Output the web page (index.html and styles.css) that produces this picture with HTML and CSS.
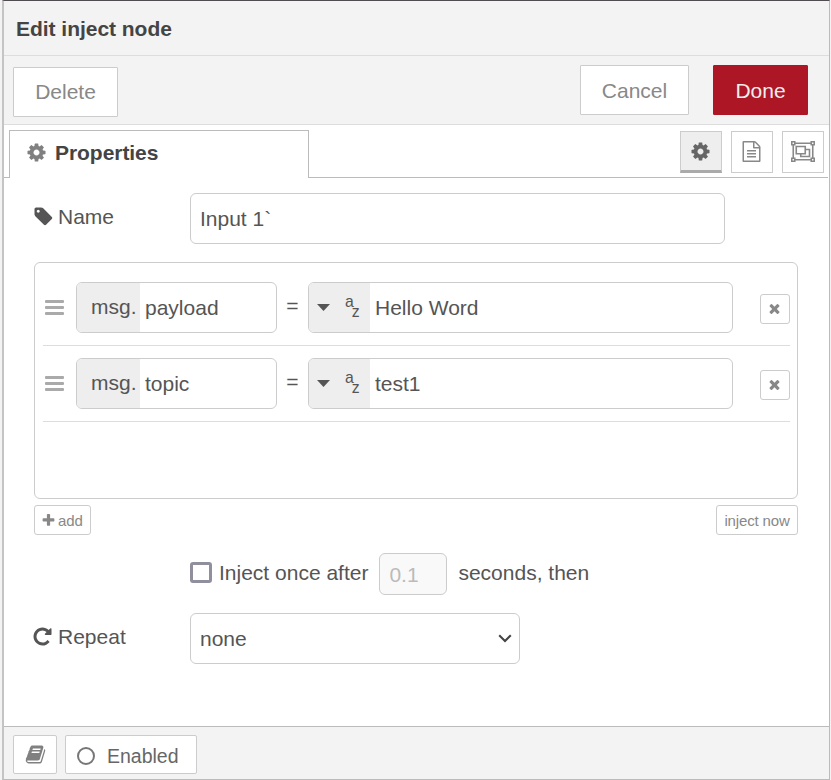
FILE: index.html
```html
<!DOCTYPE html>
<html lang="en">
<head>
<meta charset="utf-8">
<title>Edit inject node</title>
<link rel="stylesheet" href="styles.css">
</head>
<body>
<svg class="defs" aria-hidden="true">
  <symbol id="cog" viewBox="0 0 1792 1792"><path d="M1152 896q0-106-75-181t-181-75-181 75-75 181 75 181 181 75 181-75 75-181zm512-109v222q0 12-8 23t-20 13l-185 28q-19 54-39 91 35 50 107 138 10 12 10 25t-9 23q-27 37-99 108t-94 71q-12 0-26-9l-138-108q-44 23-91 38-16 136-29 186-7 28-36 28h-222q-14 0-24.5-8.5t-11.5-21.5l-28-184q-49-16-90-37l-141 107q-10 9-25 9-14 0-25-11-126-114-165-168-7-10-7-23 0-12 8-23 15-21 51-66.5t54-70.5q-27-50-41-99l-183-27q-13-2-21-12.5t-8-23.5v-222q0-12 8-23t19-13l186-28q14-46 39-92-40-57-107-138-10-12-10-24 0-10 9-23 26-36 98.5-107.5t94.5-71.5q13 0 26 10l138 107q44-23 91-38 16-136 29-186 7-28 36-28h222q14 0 24.5 8.5t11.5 21.5l28 184q49 16 90 37l142-107q9-9 24-9 13 0 25 10 129 119 165 170 7 8 7 22 0 12-8 23-15 21-51 66.5t-54 70.5q26 50 41 98l183 28q13 2 21 12.5t8 23.5z"/></symbol>
  <symbol id="times" viewBox="0 0 1792 1792"><path d="M1490 1322q0 40-28 68l-136 136q-28 28-68 28t-68-28l-294-294-294 294q-28 28-68 28t-68-28l-136-136q-28-28-28-68t28-68l294-294-294-294q-28-28-28-68t28-68l136-136q28-28 68-28t68 28l294 294 294-294q28-28 68-28t68 28l136 136q28 28 28 68t-28 68l-294 294 294 294q28 28 28 68z"/></symbol>
</svg>
<div class="tray">
  <header class="title">Edit inject node</header>
  <div class="toolbar">
    <button class="btn delete">Delete</button>
    <button class="btn cancel">Cancel</button>
    <button class="btn primary">Done</button>
  </div>
  <nav class="tabs">
    <div class="tab"><svg class="icon"><use href="#cog"/></svg><span>Properties</span></div>
    <div class="tab-buttons">
      <button class="tab-btn selected"><svg class="icon"><use href="#cog"/></svg></button>
      <button class="tab-btn"><svg class="icon" viewBox="0 0 1792 1792"><path d="M1596 380q28 28 48 76t20 88v1152q0 40-28 68t-68 28h-1344q-40 0-68-28t-28-68v-1600q0-40 28-68t68-28h896q40 0 88 20t76 48zm-444-244v376h376q-10-29-22-41l-313-313q-12-12-41-22zm384 1528v-1024h-416q-40 0-68-28t-28-68v-416h-768v1536h1280zm-1024-864q0-14 9-23t23-9h704q14 0 23 9t9 23v64q0 14-9 23t-23 9h-704q-14 0-23-9t-9-23v-64zm736 224q14 0 23 9t9 23v64q0 14-9 23t-23 9h-704q-14 0-23-9t-9-23v-64q0-14 9-23t23-9h704zm0 256q14 0 23 9t9 23v64q0 14-9 23t-23 9h-704q-14 0-23-9t-9-23v-64q0-14 9-23t23-9h704z"/></svg></button>
      <button class="tab-btn"><svg class="group-icon" viewBox="0 0 24 21"><path d="M4 2.25h16M4 18.75h16M2.250 4v13M21.750 4v13M.75.75h3v3h-3zM20.250.75h3v3h-3zM.75 17.250h3v3h-3zM20.250 17.250h3v3h-3zM5.250 5.500h9v7.250h-9zM15 8.500h3.500v7h-8.750V13.500"/></svg></button>
    </div>
  </nav>
  <main class="form">
    <div class="row name-row">
      <label class="label"><svg class="icon" viewBox="0 0 1792 1792"><path d="M576 448q0-53-37.5-90.5t-90.5-37.5-90.5 37.5-37.5 90.5 37.5 90.5 90.5 37.5 90.5-37.5 37.5-90.5zm1067 576q0 53-37 90l-491 492q-39 37-91 37-53 0-90-37l-715-716q-38-37-64.5-101t-26.5-117v-416q0-52 38-90t90-38h416q53 0 117 26.5t102 64.5l715 714q37 39 37 91z"/></svg>Name</label>
      <div class="field name-field">Input 1`</div>
    </div>
    <div class="props">
      <div class="prop">
        <span class="handle"><i></i><i></i><i></i></span>
        <div class="field typed key"><span class="type">msg.</span><span class="value">payload</span></div>
        <span class="eq">=</span>
        <div class="field typed val"><span class="type"><i class="caret"></i><span class="az"><b>a</b><b>z</b></span></span><span class="value">Hello Word</span></div>
        <button class="small remove"><svg><use href="#times"/></svg></button>
      </div>
      <div class="prop">
        <span class="handle"><i></i><i></i><i></i></span>
        <div class="field typed key"><span class="type">msg.</span><span class="value">topic</span></div>
        <span class="eq">=</span>
        <div class="field typed val"><span class="type"><i class="caret"></i><span class="az"><b>a</b><b>z</b></span></span><span class="value">test1</span></div>
        <button class="small remove"><svg><use href="#times"/></svg></button>
      </div>
    </div>
    <div class="list-actions">
      <button class="small add"><svg viewBox="0 0 1792 1792"><path d="M1600 736v192q0 40-28 68t-68 28h-416v416q0 40-28 68t-68 28h-192q-40 0-68-28t-28-68v-416h-416q-40 0-68-28t-28-68v-192q0-40 28-68t68-28h416v-416q0-40 28-68t68-28h192q40 0 68 28t28 68v416h416q40 0 68 28t28 68z"/></svg><span>add</span></button>
      <button class="small inject"><span>inject now</span></button>
    </div>
    <div class="once">
      <span class="checkbox"></span><span class="once-text">Inject once after</span>
      <div class="field delay">0.1</div>
      <span>seconds, then</span>
    </div>
    <div class="row repeat-row">
      <label class="label"><svg class="icon" viewBox="0 0 1792 1792"><path d="M1664 256v448q0 26-19 45t-45 19h-448q-42 0-59-40-17-39 14-69l138-138q-148-137-349-137-104 0-198.5 40.5t-163.5 109.5-109.5 163.5-40.5 198.5 40.5 198.5 109.5 163.5 163.5 109.5 198.5 40.5q119 0 225-52t179-147q7-10 23-12 15 0 25 9l137 138q9 8 9.5 20.5t-7.5 22.5q-109 132-264 204.5t-327 72.5q-156 0-298-61t-245-164-164-245-61-298 61-298 164-245 245-164 298-61q147 0 284.5 55.5t244.5 156.5l130-129q29-31 70-14 39 17 39 59z"/></svg>Repeat</label>
      <div class="field select">none<svg viewBox="0 0 14 9"><path d="M1.2 1.2 7 7l5.8-5.8"/></svg></div>
    </div>
  </main>
  <footer class="footer">
    <button class="foot-btn book"><svg class="icon" viewBox="0 0 1792 1792"><path d="M1703 478q40 57 18 129l-275 906q-19 64-76.5 107.5t-122.5 43.5h-923q-77 0-148.5-53.5t-99.5-131.5q-24-67-2-127 0-4 3-27t4-37q1-8-3-21.5t-3-19.5q2-11 8-21t16.5-23.5 16.5-23.5q23-38 45-91.5t30-91.5q3-10 .5-30t-.5-28q3-11 17-28t17-23q21-36 42-92t25-90q1-9-2.5-32t.5-28q4-13 22-30.5t22-22.5q19-26 42.5-84.5t27.5-96.5q1-8-3-25.5t-2-26.5q2-8 9-18t18-23 17-21q8-12 16.5-30.5t15-35 16-36 19.5-32 26.5-23.5 36-11.5 47.5 5.5l-1 3q38-9 51-9h761q74 0 114 56t18 130l-274 906q-36 119-71.5 153.5t-128.5 34.5h-869q-27 0-38 15-11 16-1 43 24 70 144 70h923q29 0 56-15.5t35-41.5l300-987q7-22 5-57 38 15 59 43zm-1064 2q-4 13 2 22.5t20 9.5h608q13 0 25.5-9.5t16.5-22.5l21-64q4-13-2-22.5t-20-9.5h-608q-13 0-25.5 9.5t-16.5 22.5zm-83 256q-4 13 2 22.5t20 9.5h608q13 0 25.5-9.5t16.5-22.5l21-64q4-13-2-22.5t-20-9.5h-608q-13 0-25.5 9.5t-16.5 22.5z"/></svg></button>
    <button class="foot-btn enabled"><i class="ring"></i>Enabled</button>
  </footer>
</div>
</body>
</html>
```
FILE: styles.css
```css
* { box-sizing: border-box; }
html, body { height: 100%; }
body {
  margin: 0;
  padding: 0 1px 0 2px;
  overflow: hidden;
  background: #f3f3f3;
  color: #555;
  font: 21px/30px "Liberation Sans", Arial, sans-serif;
}
.defs { position: absolute; width: 0; height: 0; }
svg { fill: currentColor; flex: none; display: block; }
button { margin: 0; padding: 0; font: inherit; }
.icon { width: 21px; height: 21px; }

.tray {
  display: flex;
  flex-direction: column;
  height: 780px;
  border-top: 1px solid #504c50;
  border-left: 2px solid #c4c4c4;
  border-right: 1px solid #bbb;
  border-bottom: 1px solid #bbb;
  background: #fff;
}
.title {
  height: 55px;
  padding: 13px 12px 0;
  border-bottom: 1px solid #ddd;
  background: #f3f3f3;
  color: #444;
  font-weight: bold;
  letter-spacing: -0.03px;
}
.toolbar {
  display: flex;
  height: 69px;
  padding: 9px 21px 0 9px;
  border-bottom: 1px solid #ddd;
  background: #f3f3f3;
}
.btn {
  height: 50px;
  border: 1px solid #ccc;
  border-radius: 1px;
  background: #fff;
  color: #888;
}
.delete { width: 105px; margin: 2px auto 0 0; }
.cancel { width: 109px; margin-right: 24px; padding-top: 2px; }
.primary { width: 95px; padding-top: 2px; border-color: #ad1625; background: #ad1625; color: #eee; }

.tabs { display: flex; height: 53px; padding-right: 1px; }
.tabs::before { content: ""; width: 5px; border-bottom: 1px solid #bbb; }
.tab {
  display: flex;
  align-items: center;
  gap: 8px;
  width: 300px;
  margin-top: 5px;
  padding: 0 0 3px 16px;
  border: 1px solid #bbb;
  border-bottom: 0;
  color: #444;
  font-weight: bold;
  letter-spacing: -0.05px;
}
.tab .icon { margin-bottom: 2px; color: #808080; }
.tab-buttons {
  display: flex;
  flex: 1;
  justify-content: flex-end;
  gap: 9px;
  padding: 6px 4px 0 0;
  border-bottom: 1px solid #bbb;
}
.tab-btn {
  display: flex;
  align-items: center;
  justify-content: center;
  width: 42px;
  height: 42px;
  padding: 0 1px 1px 0;
  border: 1px solid #ccc;
  background: #fff;
  color: #888;
}
.tab-btn.selected { padding-bottom: 0; border-bottom: 3px solid #aaa; background: #eee; color: #666; }
.group-icon { width: 24px; height: 21px; fill: none; stroke: currentColor; stroke-width: 1.6; }

.form { flex: 1; padding: 15px 31px 0 30px; }
.row { display: flex; align-items: flex-start; }
.label { display: flex; align-items: center; gap: 3px; width: 156px; height: 48px; }
.name-row .icon { margin: 0 1px 2px -1px; }
.repeat-row .icon { margin: 0 2px 1px -2px; }
.field {
  display: flex;
  align-items: center;
  height: 51px;
  border: 1px solid #ccc;
  border-radius: 6px;
  background: #fff;
}
.name-field { width: 535px; padding-left: 9px; }

.props {
  height: 237px;
  margin-top: 18px;
  padding: 7px;
  border: 1px solid #ccc;
  border-radius: 6px;
}
.prop {
  display: flex;
  height: 76px;
  padding: 12px 0 0 3px;
  margin-left: 1px;
  border-bottom: 1px solid #ddd;
}
.handle { display: flex; flex-direction: column; gap: 3px; width: 19px; margin: 18px 12px 0 -1px; }
.handle i { height: 3px; background: #aaa; border-radius: 1px; }
.typed { overflow: hidden; }
.type { display: flex; height: 49px; background: #eee; }
.key { width: 201px; }
.key .type { width: 63px; padding: 9px 0 0 14px; }
.key .value { padding-left: 5px; }
.eq { width: 31px; padding-top: 9px; text-align: center; }
.val { width: 425px; }
.val .type { width: 61px; padding-left: 8px; }
.val .value { padding-left: 5px; }
.caret { margin-top: 21px; width: 13px; height: 7px; background: #555; clip-path: polygon(0 0, 100% 0, 50% 100%); }
.az { display: flex; margin-left: 15px; font-size: 15.75px; line-height: 10px; }
.az b { font-weight: normal; margin-top: 14px; height: 10px; }
.az b + b { margin: 24px 0 0 -2px; }

.small {
  display: flex;
  align-items: center;
  height: 30px;
  border: 1px solid #ccc;
  border-radius: 3px;
  background: #fff;
  color: #888;
  font-size: 15px;
  letter-spacing: -0.15px;
}
.small span { padding-top: 2px; }
.small svg { width: 15px; height: 15px; }
.remove { width: 30px; justify-content: center; margin: 12px 0 0 auto; }
.remove svg { margin: 0 1px 1px 0; }
.list-actions { display: flex; justify-content: space-between; margin-top: 6px; }
.add { width: 57px; padding-left: 6px; gap: 2px; }
.inject { width: 82px; justify-content: center; }

.once { display: flex; height: 42px; margin: 18px 0 0 156px; line-height: 40px; }
.checkbox { width: 22px; height: 21px; margin: 9px 7px 0 0; border: 3px solid #8f8f9d; border-radius: 3px; }
.delay { width: 68px; height: 42px; margin: 0 11px 0 11px; padding: 2px 0 0 9px; background: #f9f9f9; color: #bbb; }
.repeat-row { margin-top: 18px; }
.select { justify-content: space-between; width: 330px; padding: 0 7px 0 9px; }
.select svg { width: 14px; height: 9px; fill: none; stroke: #444; stroke-width: 2; }

.footer {
  display: flex;
  gap: 8px;
  height: 53px;
  padding: 8px 9px 0;
  border-top: 1px solid #bbb;
  background: #f3f3f3;
}
.foot-btn {
  display: flex;
  align-items: center;
  height: 39px;
  border: 1px solid #ccc;
  border-radius: 2px;
  background: #fff;
  color: #666;
}
.book { width: 44px; justify-content: center; color: #808080; }
.enabled { width: 132px; padding: 2px 0 0 11px; gap: 12px; font-size: 19.5px; }
.ring { width: 18px; height: 18px; border: 2px solid #777; border-radius: 50%; }
```
